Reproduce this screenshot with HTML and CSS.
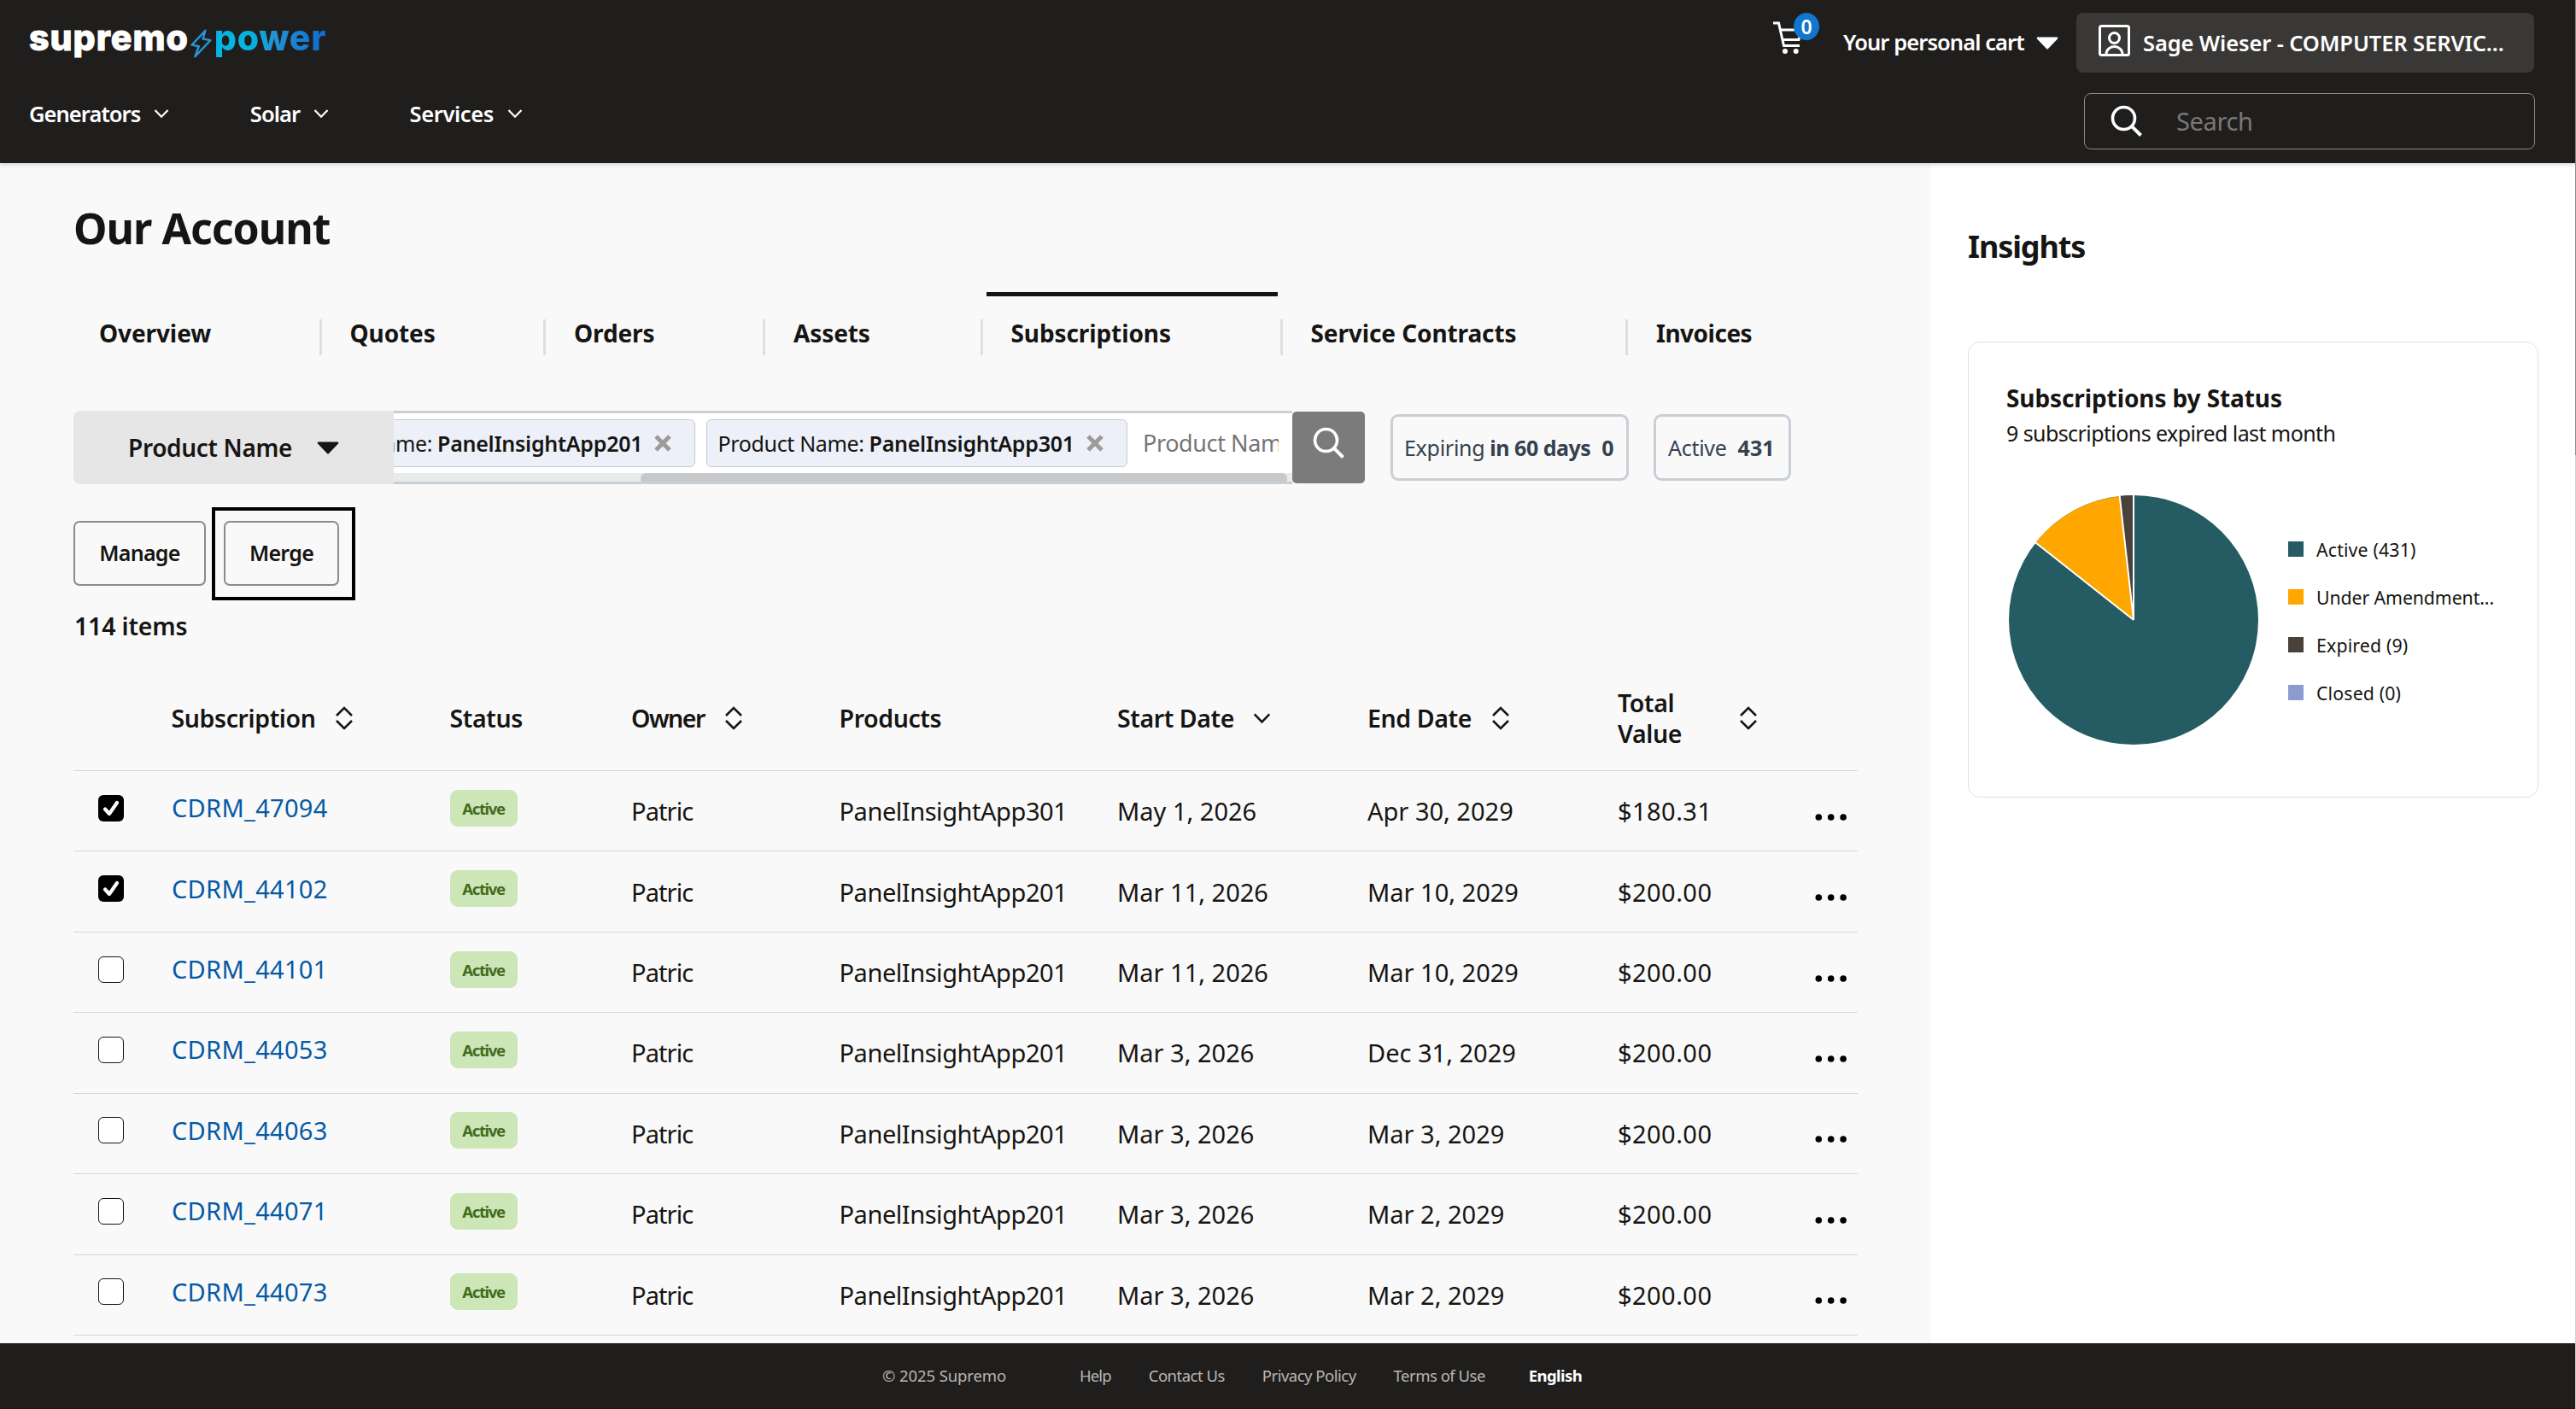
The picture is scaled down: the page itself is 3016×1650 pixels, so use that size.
FILE: index.html
```html
<!DOCTYPE html>
<html lang="en">
<head>
<meta charset="utf-8">
<title>Our Account</title>
<link rel="stylesheet" href="styles.css">
</head>
<body>
<svg class="defs" width="0" height="0">
  <symbol id="chev" viewBox="0 0 18 12"><path d="M1.500 2 9 9.700 16.500 2" fill="none" stroke="currentColor" stroke-width="2.2"/></symbol>
  <symbol id="sort" viewBox="0 0 22 30"><path d="M2 12 11 3l9 9M2 18l9 9 9-9" fill="none" stroke="currentColor" stroke-width="2.6"/></symbol>
  <symbol id="cross" viewBox="0 0 20 20"><path d="M2 2 18 18M18 2 2 18" fill="none" stroke="currentColor" stroke-width="5"/></symbol>
  <symbol id="lens" viewBox="0 0 38 38"><circle cx="15.500" cy="15.500" r="13" fill="none" stroke="currentColor" stroke-width="3.600"/><path d="M24.800 24.800 35.500 35.500" stroke="currentColor" stroke-width="4"/></symbol>
  <symbol id="dots" viewBox="0 0 38 10"><circle cx="4.300" cy="5" r="3.800"/><circle cx="18.700" cy="5" r="3.800"/><circle cx="33.100" cy="5" r="3.800"/></symbol>
</svg>

<header class="header">
  <div class="topbar">
    <div class="logo">
      <span class="logo-a">supremo</span>
      <svg class="bolt" viewBox="0 0 24 33"><path d="M16.500 2.500 2 18l7.500 1.500L5.500 30.500 22 13l-8-1.500z" fill="none" stroke="#2795d6" stroke-width="2.200" stroke-linejoin="round"/></svg>
      <span class="logo-b">power</span>
    </div>
    <div class="cart">
      <svg class="cart-icon" viewBox="0 0 38 40"><g fill="none" stroke="#fff" stroke-width="3"><path d="M0 3h6.500l6 26.500h18.500"/><path d="M8.500 11h25l-3.500 11.500H11.500"/></g><circle cx="14" cy="36" r="3" fill="#fff"/><circle cx="26.700" cy="36" r="3" fill="#fff"/></svg>
      <span class="cart-count">0</span>
    </div>
    <div class="cart-name">Your personal cart</div>
    <svg class="caret" viewBox="0 0 26 15"><path d="M1.500.5h23q1.500.5.5 2L14 14q-1 1-2 0L1 2.500Q0 1 1.500.5z" fill="#fff"/></svg>
    <div class="account">
      <svg class="user" viewBox="0 0 38 38"><g fill="none" stroke="#fff" stroke-width="3"><rect x="1.500" y="1.500" width="34" height="34" rx="2"/><circle cx="18.500" cy="15.500" r="6"/><path d="M9 34.500a9.500 9 0 0 1 19 0"/></g></svg>
      <span>Sage Wieser - COMPUTER SERVIC...</span>
    </div>
  </div>
  <div class="navbar">
    <nav class="nav">
      <span class="nav-item tighter">Generators<svg class="nav-chev"><use href="#chev"/></svg></span>
      <span class="nav-item tighter">Solar<svg class="nav-chev"><use href="#chev"/></svg></span>
      <span class="nav-item">Services<svg class="nav-chev"><use href="#chev"/></svg></span>
    </nav>
    <div class="search"><svg class="lens"><use href="#lens"/></svg><span>Search</span></div>
  </div>
</header>

<main class="main">
  <section class="content">
    <h1 class="title">Our Account</h1>
    <div class="tabs">
      <span class="tab">Overview</span><span class="tab">Quotes</span><span class="tab">Orders</span><span class="tab">Assets</span><span class="tab active">Subscriptions</span><span class="tab">Service Contracts</span><span class="tab last">Invoices</span>
    </div>
    <div class="filters">
      <div class="field-select">Product Name<svg class="caret dark" viewBox="0 0 26 15"><path d="M1.500.5h23q1.500.5.5 2L14 14q-1 1-2 0L1 2.500Q0 1 1.500.5z" fill="#161513"/></svg></div>
      <div class="tokens">
        <div class="token-row">
          <span class="chip"><span>Product Name:</span><b>PanelInsightApp201</b><svg class="cross"><use href="#cross"/></svg></span>
          <span class="chip"><span>Product Name:</span><b>PanelInsightApp301</b><svg class="cross"><use href="#cross"/></svg></span>
          <span class="placeholder">Product Name</span>
        </div>
        <div class="scroll"><div class="thumb"></div></div>
      </div>
      <div class="go"><svg class="lens"><use href="#lens"/></svg></div>
      <div class="pill first"><span>Expiring</span><b>in 60 days</b><b class="num">0</b></div>
      <div class="pill second"><span>Active</span><b class="num">431</b></div>
    </div>
    <div class="actions">
      <div class="btn manage">Manage</div>
      <div class="focus"><div class="btn merge">Merge</div></div>
    </div>
    <div class="count">114 items</div>
    <div class="table">
      <div class="row head">
        <span></span>
        <span>Subscription<svg class="sort"><use href="#sort"/></svg></span>
        <span>Status</span>
        <span><span class="squeeze">Owner</span><svg class="sort"><use href="#sort"/></svg></span>
        <span>Products</span>
        <span>Start Date<svg class="down"><use href="#chev"/></svg></span>
        <span>End Date<svg class="sort"><use href="#sort"/></svg></span>
        <span><span class="wrap">Total Value</span><svg class="sort last-sort"><use href="#sort"/></svg></span>
        <span></span>
      </div>
      <div class="row"><span class="up"><i class="check on"><svg viewBox="0 0 30 31"><path d="M8 16.500l5 5.500 9-13" fill="none" stroke="#fff" stroke-width="4.200" stroke-linecap="round" stroke-linejoin="round"/></svg></i></span><a class="up link">CDRM_47094</a><span class="up"><em class="badge">Active</em></span><span class="owner">Patric</span><span class="prod">PanelInsightApp301</span><span>May 1, 2026</span><span>Apr 30, 2029</span><span class="money">$180.31</span><span class="more"><svg><use href="#dots"/></svg></span></div>
      <div class="row"><span class="up"><i class="check on"><svg viewBox="0 0 30 31"><path d="M8 16.500l5 5.500 9-13" fill="none" stroke="#fff" stroke-width="4.200" stroke-linecap="round" stroke-linejoin="round"/></svg></i></span><a class="up link">CDRM_44102</a><span class="up"><em class="badge">Active</em></span><span class="owner">Patric</span><span class="prod">PanelInsightApp201</span><span>Mar 11, 2026</span><span>Mar 10, 2029</span><span class="money">$200.00</span><span class="more"><svg><use href="#dots"/></svg></span></div>
      <div class="row"><span class="up"><i class="check"></i></span><a class="up link">CDRM_44101</a><span class="up"><em class="badge">Active</em></span><span class="owner">Patric</span><span class="prod">PanelInsightApp201</span><span>Mar 11, 2026</span><span>Mar 10, 2029</span><span class="money">$200.00</span><span class="more"><svg><use href="#dots"/></svg></span></div>
      <div class="row"><span class="up"><i class="check"></i></span><a class="up link">CDRM_44053</a><span class="up"><em class="badge">Active</em></span><span class="owner">Patric</span><span class="prod">PanelInsightApp201</span><span>Mar 3, 2026</span><span>Dec 31, 2029</span><span class="money">$200.00</span><span class="more"><svg><use href="#dots"/></svg></span></div>
      <div class="row"><span class="up"><i class="check"></i></span><a class="up link">CDRM_44063</a><span class="up"><em class="badge">Active</em></span><span class="owner">Patric</span><span class="prod">PanelInsightApp201</span><span>Mar 3, 2026</span><span>Mar 3, 2029</span><span class="money">$200.00</span><span class="more"><svg><use href="#dots"/></svg></span></div>
      <div class="row"><span class="up"><i class="check"></i></span><a class="up link">CDRM_44071</a><span class="up"><em class="badge">Active</em></span><span class="owner">Patric</span><span class="prod">PanelInsightApp201</span><span>Mar 3, 2026</span><span>Mar 2, 2029</span><span class="money">$200.00</span><span class="more"><svg><use href="#dots"/></svg></span></div>
      <div class="row"><span class="up"><i class="check"></i></span><a class="up link">CDRM_44073</a><span class="up"><em class="badge">Active</em></span><span class="owner">Patric</span><span class="prod">PanelInsightApp201</span><span>Mar 3, 2026</span><span>Mar 2, 2029</span><span class="money">$200.00</span><span class="more"><svg><use href="#dots"/></svg></span></div>
    </div>
  </section>
  <aside class="side">
    <h2 class="side-title">Insights</h2>
    <div class="card">
      <h3 class="card-title">Subscriptions by Status</h3>
      <p class="card-sub">9 subscriptions expired last month</p>
      <div class="chart">
        <svg class="pie" viewBox="-148 -148 296 296">
          <circle r="146" fill="#255c63"/>
          <path d="M0 0V-146A146 146 0 0 0 -16.300 -145.100z" fill="#48423b"/>
          <path d="M0 0-16.300-145.100A146 146 0 0 0 -114.600 -90.500z" fill="#ffa600"/>
          <path d="M0 0V-146M0 0-16.300-145.100M0 0-114.600-90.500" stroke="#fff" stroke-width="2"/>
        </svg>
        <div class="legend">
          <span><i class="key teal"></i>Active (431)</span>
          <span class="snug"><i class="key orange"></i>Under Amendment...</span>
          <span><i class="key brown"></i>Expired (9)</span>
          <span><i class="key blue"></i>Closed (0)</span>
        </div>
      </div>
    </div>
  </aside>
</main>

<footer class="footer">
  <span class="copy">© 2025 Supremo</span><span class="help">Help</span><span>Contact Us</span><span>Privacy Policy</span><span>Terms of Use</span><b>English</b>
</footer>
<div class="edge"><div class="edge-thumb"></div></div>
</body>
</html>
```
FILE: styles.css
```css
* { box-sizing: border-box; margin: 0; padding: 0; }
body { width: 3016px; height: 1650px; overflow: hidden; display: flex; flex-direction: column; position: relative; background: #f9f9f9; color: #161513; font-family: "Noto Sans", sans-serif; font-size: 29px; white-space: nowrap; }
svg { display: block; flex: none; }
i, em { font-style: normal; }
.defs { position: absolute; }

.header { height: 191px; flex: none; background: #201e1c; color: #fff; padding: 0 49px 0 33px; font-size: 25.5px; font-weight: 600; box-shadow: 0 1px 6px rgba(0,0,0,.2); z-index: 1; }
.topbar { height: 100px; display: flex; align-items: center; }
.logo { display: flex; align-items: center; font: 800 41px/40px Inter, sans-serif; margin: -13px auto 0 1px; }
.logo-a { letter-spacing: 1px; -webkit-text-stroke: 1px #fff; }
.bolt { width: 27px; height: 36px; margin: 14px 2px 0 1px; }
.logo-b { letter-spacing: .7px; color: transparent; background: linear-gradient(90deg, #06b4e1 30%, #2195d4 52%, #1070d0 95%); background-clip: text; -webkit-background-clip: text; padding-bottom: 8px; margin-bottom: -8px; }
.cart { position: relative; width: 82px; height: 40px; margin-top: -12px; }
.cart-icon { width: 38px; height: 40px; }
.cart-count { position: absolute; left: 24px; top: -9px; width: 30px; height: 32px; border-radius: 50%; background: #1176ce; font-size: 23px; line-height: 32px; text-align: center; }
.cart-name { letter-spacing: -.92px; width: 226px; line-height: 36px; margin-top: -2px; }
.caret { width: 26px; height: 15px; }
.topbar .caret { margin-right: 21px; }
.account { width: 536px; height: 70px; border-radius: 8px; background: #3a3836; display: flex; align-items: center; padding-left: 26px; letter-spacing: -.12px; }
.user { width: 38px; height: 38px; margin: -4px 14px 0 0; }
.navbar { height: 91px; display: flex; align-items: flex-start; justify-content: space-between; }
.nav { display: flex; gap: 94.5px; padding: 15px 0 0 1px; line-height: 36px; }
.nav-item { display: flex; align-items: center; gap: 16px; letter-spacing: -.37px; }
.nav-item.tighter { letter-spacing: -.95px; }
.nav-chev { width: 18px; height: 12px; }
.search { width: 528px; height: 66px; margin: 9px -1px 0 0; border: 1px solid #8b8987; border-radius: 8px; display: flex; align-items: center; padding-left: 30px; color: #7b7876; font-weight: 400; font-size: 29px; letter-spacing: -.35px; }
.search span { margin-top: -2px; }
.search .lens { width: 38px; height: 38px; color: #fff; margin-right: 39px; }

.main { flex: 1; display: grid; grid-template-columns: 2261px 1fr; min-height: 0; overflow: hidden; }
.content { padding: 46px 86px 0; }
.title { font-size: 50px; line-height: 60px; letter-spacing: -1px; }
.tabs { margin-top: 45px; height: 74px; padding-top: 32px; display: grid; grid-template-columns: 290.5px 262.5px 257px 254.5px 351px 404.5px auto; font-size: 28px; font-weight: 700; line-height: 32px; letter-spacing: -.1px; }
.tab { position: relative; height: 42px; padding-left: 33px; border-right: 3px solid #dfdfdf; }
.tab:first-child { padding-left: 30px; }
.tab.last { border: 0; letter-spacing: -.5px; }
.tab.active::before { content: ""; position: absolute; left: 4px; top: -32px; width: 341px; height: 5px; background: #161513; }
.filters { margin-top: 65px; height: 86px; display: flex; align-items: center; }
.field-select { width: 375px; height: 86px; background: #e6e6e6; border-radius: 8px 0 0 8px; display: flex; align-items: center; padding-left: 64px; gap: 29px; font-size: 28px; font-weight: 600; letter-spacing: -.33px; }
.tokens { width: 1052px; height: 86px; background: #fff; border: solid #c9cfd6; border-width: 3px 0; overflow: hidden; }
.token-row { height: 70px; padding: 7px 0; display: flex; gap: 12.5px; margin-left: -140px; width: 1176px; overflow: hidden; }
.chip { flex: none; width: 493px; height: 56px; border: 1px solid #c5cbd2; border-radius: 6px; background: #edf0f9; display: flex; align-items: center; padding-left: 13px; font-size: 25px; letter-spacing: -.35px; }
.chip b { font-weight: 600; letter-spacing: -.27px; margin-left: 6px; }
.cross { width: 20px; height: 20px; color: #9c9b99; margin-left: 14px; }
.placeholder { font-size: 27px; line-height: 56px; color: #757575; padding-left: 6px; letter-spacing: -.4px; overflow: hidden; }
.scroll { height: 13px; background: #e9ebea; }
.thumb { width: 757px; height: 13px; margin-left: 289px; background: #c6c8ca; border-radius: 6px; }
.go { width: 85px; height: 84px; background: #7b7b7b; border-radius: 5px; color: #fff; padding: 18px 0 0 24px; }
.go .lens { width: 38px; height: 38px; }
.pill { height: 78px; border: 3px solid #c9cfd6; border-radius: 9px; display: flex; align-items: center; font-size: 25px; color: #35414f; letter-spacing: -.28px; }
.pill b { letter-spacing: -.49px; margin-left: 6px; }
.pill .num { letter-spacing: 0; margin-left: 13px; }
.pill.first { width: 279px; margin-left: 30px; padding-left: 13px; }
.pill.second { width: 161px; margin-left: 29px; padding-left: 14px; }
.actions { margin-top: 27px; height: 109px; display: flex; align-items: flex-start; }
.btn { height: 76px; border: 2px solid #8b8b8b; border-radius: 7px; font-size: 25px; font-weight: 600; letter-spacing: -.7px; line-height: 70px; text-align: center; }
.manage { width: 155px; margin-top: 16px; }
.focus { width: 168px; height: 109px; margin-left: 7px; border: 4px solid #000; padding: 12px 0 0 10px; }
.merge { width: 135px; }
.count { margin-top: 11px; padding-left: 1px; line-height: 38px; font-size: 28.5px; font-weight: 600; letter-spacing: -.19px; }
.row { width: 2089px; height: 94.43px; display: grid; grid-template-columns: 114.5px 326px 212.5px 243.5px 325.5px 293px 293px 231px 50px; align-items: center; border-bottom: 1px solid #d6d6d6; }
.row > * { display: flex; align-items: center; }
.head { height: 151px; padding-top: 28px; font-size: 28.5px; font-weight: 600; line-height: 36px; letter-spacing: -.4px; }
.squeeze { letter-spacing: -1.5px; }
.sort { width: 22px; height: 30px; margin-left: 23px; }
.last-sort { margin-left: 22px; }
.down { width: 21px; height: 14px; margin-left: 22px; }
.wrap { width: 142px; white-space: normal; padding-right: 60px; margin-right: -22px; }
.up { padding-bottom: 7px; }
.link { color: #0559a5; letter-spacing: .29px; padding: 0 0 8px .5px; }
.owner { letter-spacing: -.9px; }
.prod { letter-spacing: -.45px; }
.money { letter-spacing: .45px; }
.badge { width: 79px; height: 43px; border-radius: 9px; background: #cde6b8; color: #436b1d; font-size: 18.5px; font-weight: 700; letter-spacing: -1.3px; line-height: 43px; text-align: center; }
.check { width: 30px; height: 31px; margin-left: 28.5px; border: 1.5px solid #161513; border-radius: 6px; background: #fff; }
.check.on { background: #000; border: 0; }
.more { padding-top: 14px; }
.more svg { width: 38px; height: 10px; }

.side { background: #fff; padding: 76px 0 0 43px; }
.side-title { font-size: 36px; line-height: 44px; letter-spacing: -1.1px; }
.card { width: 668px; height: 534px; margin-top: 89px; border: 1px solid #e2e2e2; border-radius: 14px; padding: 47px 0 0 44px; }
.card-title { font-size: 28px; line-height: 36px; letter-spacing: -.1px; }
.card-sub { font-size: 25px; line-height: 34px; letter-spacing: -.58px; margin-top: 6px; }
.chart { display: flex; align-items: center; margin: 54px 0 0 1px; }
.pie { width: 296px; height: 296px; }
.legend { margin: 3px 0 0 33px; font-size: 21.3px; line-height: 56px; letter-spacing: .15px; }
.legend span { display: flex; align-items: center; }
.legend .snug { letter-spacing: -.1px; }
.key { width: 18px; height: 18px; margin: -2px 15px 0 0; }
.teal { background: #255c63; }
.orange { background: #ffa600; }
.brown { background: #48423b; }
.blue { background: #8b9cce; }

.footer { height: 77px; flex: none; background: #201e1c; color: #b9b7b5; border-bottom: 1px solid #1d1320; display: flex; align-items: center; gap: 44px; padding: 0 0 2px 1033px; font-size: 18.5px; letter-spacing: -.5px; }
.copy { width: 144px; letter-spacing: -.1px; }
.help { margin-left: 43px; letter-spacing: -.9px; }
.footer b { color: #fff; margin-left: 7px; letter-spacing: -.6px; }
.edge { position: absolute; right: 0; top: 0; width: 1px; height: 1650px; background: #cfcfcf; z-index: 2; }
.edge-thumb { height: 533px; background: #8a8a8a; }
```
